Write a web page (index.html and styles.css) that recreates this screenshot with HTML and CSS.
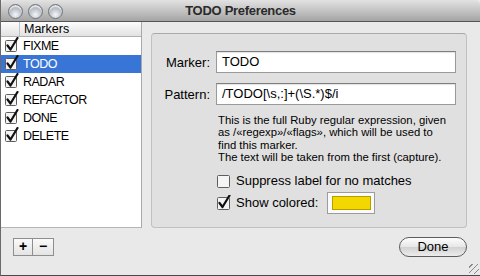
FILE: index.html
```html
<!DOCTYPE html>
<html lang="en">
<head>
    <meta charset="UTF-8">
    <title>TODO Preferences</title>
    <link rel="stylesheet" href="styles.css">
</head>
<body>
<div class="window">
    <div class="titlebar">
        <div class="lights">
            <span class="light"></span>
            <span class="light"></span>
            <span class="light"></span>
        </div>
        <div class="title">TODO Preferences</div>
    </div>

    <div class="content">
        <!-- marker list -->
        <div class="sidebar">
            <div class="list">
                <div class="list-head">
                    <div class="col-check"></div>
                    <div class="col-name">Markers</div>
                </div>
                <div class="row"><svg class="check" viewBox="0 0 14 16"><rect x="0.5" y="3.5" width="11" height="11" rx="1"/><path d="M2.5 8.5 L5.5 12.5 L12.5 1"/></svg>FIXME</div>
                <div class="row selected"><svg class="check" viewBox="0 0 14 16"><rect x="0.5" y="3.5" width="11" height="11" rx="1"/><path d="M2.5 8.5 L5.5 12.5 L12.5 1"/></svg>TODO</div>
                <div class="row"><svg class="check" viewBox="0 0 14 16"><rect x="0.5" y="3.5" width="11" height="11" rx="1"/><path d="M2.5 8.5 L5.5 12.5 L12.5 1"/></svg>RADAR</div>
                <div class="row"><svg class="check" viewBox="0 0 14 16"><rect x="0.5" y="3.5" width="11" height="11" rx="1"/><path d="M2.5 8.5 L5.5 12.5 L12.5 1"/></svg>REFACTOR</div>
                <div class="row"><svg class="check" viewBox="0 0 14 16"><rect x="0.5" y="3.5" width="11" height="11" rx="1"/><path d="M2.5 8.5 L5.5 12.5 L12.5 1"/></svg>DONE</div>
                <div class="row"><svg class="check" viewBox="0 0 14 16"><rect x="0.5" y="3.5" width="11" height="11" rx="1"/><path d="M2.5 8.5 L5.5 12.5 L12.5 1"/></svg>DELETE</div>
            </div>
            <div class="list-buttons">
                <div class="seg">+</div>
                <div class="seg">&minus;</div>
            </div>
        </div>

        <!-- marker settings -->
        <div class="main">
            <div class="panel">
                <div class="field">
                    <div class="label">Marker:</div>
                    <div class="textbox">TODO</div>
                </div>
                <div class="field">
                    <div class="label">Pattern:</div>
                    <div class="textbox">/TODO[\s,:]+(\S.*)$/i</div>
                </div>
                <div class="help">
                    This is the full Ruby regular expression, given<br>
                    as /«regexp»/«flags», which will be used to<br>
                    find this marker.<br>
                    The text will be taken from the first (capture).
                </div>
                <div class="option">
                    <svg class="box" viewBox="0 0 14 16"><rect x="0.5" y="2.5" width="12" height="12" rx="1"/></svg>
                    Suppress label for no matches
                </div>
                <div class="option">
                    <svg class="box" viewBox="0 0 14 16"><rect x="0.5" y="2.5" width="12" height="12" rx="1"/><path d="M2.5 8 L5.5 12 L12.5 0.5"/></svg>
                    Show colored:
                    <div class="well"><div class="swatch"></div></div>
                </div>
            </div>
            <div class="actions">
                <div class="done">Done</div>
            </div>
        </div>
    </div>

    <div class="grip"></div>
</div>
</body>
</html>
```

FILE: styles.css
```css
body {
    margin: 0;
    font-family: "Liberation Sans", Arial, sans-serif;
    color: #000;
    background: #e8e8e8;
}
.window {
    position: relative;
    width: 480px;
    height: 276px;
    background: #e9e9e9;
    border-left: 1px solid #6a6a6a;
    border-bottom: 1px solid #4a4a4a;
    box-sizing: border-box;
    overflow: hidden;
}
/* title bar */
.titlebar {
    position: relative;
    height: 22px;
    box-sizing: border-box;
    background: linear-gradient(#e2e2e2, #c4c4c4 50%, #a4a4a4);
    border-bottom: 1px solid #555;
    border-radius: 5px 5px 0 0;
}
.lights {
    position: absolute;
    left: 7px;
    top: 4px;
    display: flex;
    gap: 5px;
}
.light {
    width: 13px;
    height: 13px;
    border-radius: 50%;
    border: 1px solid #6f747c;
    background: radial-gradient(circle at 50% 75%, #f4f6f8 0, #c3c8cf 45%, #8b9098 100%);
    box-shadow: inset 0 2px 1px rgba(255,255,255,0.7);
}
.title {
    text-align: center;
    font-weight: bold;
    font-size: 13px;
    letter-spacing: -0.3px;
    line-height: 21px;
    color: #2a2a2a;
}
.content {
    display: flex;
    height: 253px;
}
/* list */
.sidebar {
    width: 141px;
    display: flex;
    flex-direction: column;
}
.list {
    height: 206px;
    background: #fff;
    border-right: 1px solid #a9a9a9;
    border-bottom: 1px solid #b5b5b5;
    box-sizing: border-box;
}
.list-head {
    display: flex;
    height: 15px;
    box-sizing: border-box;
    background: linear-gradient(#fdfdfd, #efefef 50%, #e2e2e2);
    border-bottom: 1px solid #b0b0b0;
    font-size: 12.5px;
    line-height: 14px;
}
.col-check {
    width: 18px;
    border-right: 1px solid #c2c2c2;
}
.col-name {
    padding-left: 4px;
}
.row {
    display: flex;
    align-items: center;
    height: 18px;
    font-size: 12.5px;
    letter-spacing: -0.5px;
    padding-left: 4px;
}
.row.selected {
    background: #3875d7;
    color: #fff;
}
.check {
    width: 14px;
    height: 16px;
    margin-right: 4px;
    margin-top: -3px;
}
.check rect, .box rect {
    fill: #f4f4f4;
    stroke: #5e5e5e;
}
.check path, .box path {
    fill: none;
    stroke: #111;
    stroke-width: 2.2;
    stroke-linecap: round;
    stroke-linejoin: round;
}
.list-buttons {
    display: flex;
    margin: 10px 0 0 12px;
}
.seg {
    width: 20px;
    height: 18px;
    box-sizing: border-box;
    border: 1px solid #8e8e8e;
    background: linear-gradient(#fafafa, #e4e4e4);
    text-align: center;
    font-weight: bold;
    font-size: 14px;
    line-height: 15px;
}
.seg + .seg {
    border-left: none;
    width: 21px;
}
/* settings panel */
.main {
    flex: 1;
    padding: 11px 13px 0 9px;
}
.panel {
    height: 195px;
    box-sizing: border-box;
    background: #e0e0e0;
    border: 1px solid #c0c0c0;
    border-top-color: #a9a9a9;
    border-radius: 4px;
    padding: 17px 10px 0 0;
}
.field {
    display: flex;
    align-items: center;
    margin-bottom: 10px;
}
.label {
    width: 58px;
    text-align: right;
    font-size: 13px;
    margin-right: 6px;
}
.textbox {
    flex: 1;
    height: 22px;
    box-sizing: border-box;
    background: #fff;
    border: 1px solid #9a9a9a;
    border-top-color: #7e7e7e;
    box-shadow: inset 0 1px 1px rgba(0,0,0,0.12);
    font-size: 13px;
    line-height: 20px;
    padding-left: 5px;
}
.help {
    margin: -1px 0 0 66px;
    font-size: 11.3px;
    line-height: 12.4px;
    white-space: nowrap;
}
.option {
    display: flex;
    align-items: center;
    margin-left: 65px;
    font-size: 13px;
    height: 22px;
}
.help + .option {
    margin-top: 6px;
}
.box {
    width: 14px;
    height: 16px;
    margin-right: 5px;
}
.well {
    width: 48px;
    height: 22px;
    box-sizing: border-box;
    margin-left: 9px;
    background: #fafafa;
    border: 1px solid #9c9c9c;
    padding: 3px 3px 3px 4px;
}
.swatch {
    height: 100%;
    background: #f3d800;
    border: 1px solid #b59f00;
    box-sizing: border-box;
}
.actions {
    display: flex;
    justify-content: flex-end;
    margin-top: 9px;
}
.done {
    width: 68px;
    height: 20px;
    box-sizing: border-box;
    border: 1px solid #5d5d5d;
    border-radius: 10px;
    background: linear-gradient(#fdfdfd, #e6e6e6 50%, #d2d2d2 52%, #ececec);
    text-align: center;
    font-size: 13px;
    line-height: 18px;
}
.grip {
    position: absolute;
    right: 1px;
    bottom: 1px;
    width: 10px;
    height: 10px;
    background: repeating-linear-gradient(135deg, transparent 0 2px, #8a8a8a 2px 3px, transparent 3px 4px);
}
```
